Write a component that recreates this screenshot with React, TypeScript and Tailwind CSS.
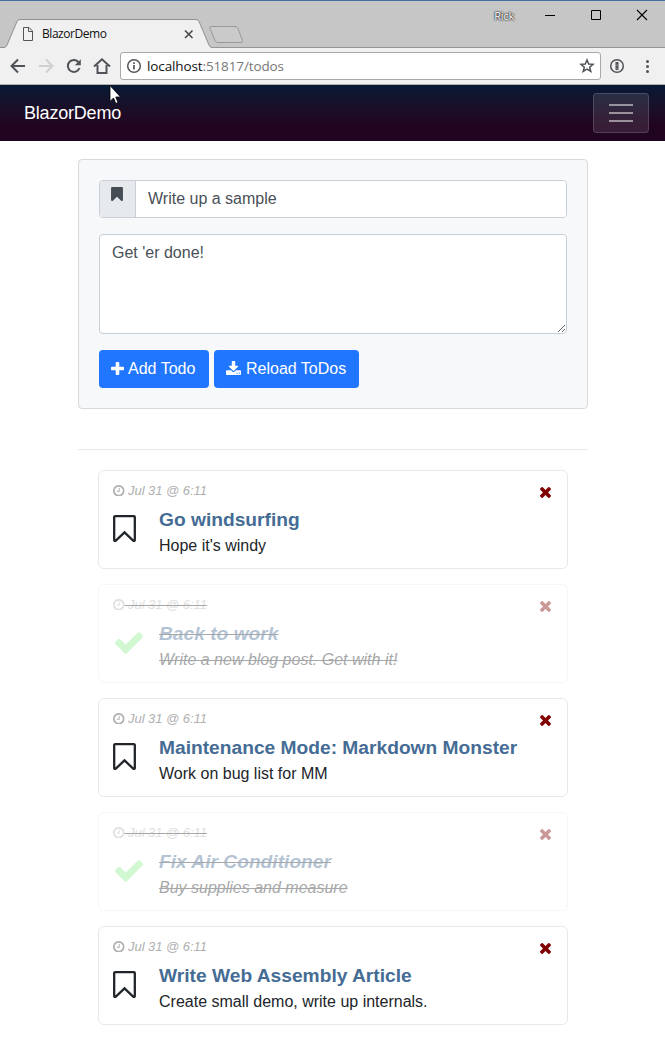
import React from "react";

const ICONS = {
  plus: {
    box: "192 128 1408 1408",
    d: "M1600 736v192q0 40-28 68t-68 28h-416v416q0 40-28 68t-68 28h-192q-40 0-68-28t-28-68v-416h-416q-40 0-68-28t-28-68v-192q0-40 28-68t68-28h416v-416q0-40 28-68t68-28h192q40 0 68 28t28 68v416h416q40 0 68 28t28 68z",
  },
  download: {
    box: "64 0 1664 1536",
    d: "M1344 1344q0-26-19-45t-45-19-45 19-19 45 19 45 45 19 45-19 19-45zm256 0q0-26-19-45t-45-19-45 19-19 45 19 45 45 19 45-19 19-45zm128-224v320q0 40-28 68t-68 28h-1472q-40 0-68-28t-28-68v-320q0-40 28-68t68-28h465l135 136q58 56 136 56t136-56l136-136h464q40 0 68 28t28 68zm-325-569q17 41-14 70l-448 448q-18 19-45 19t-45-19l-448-448q-31-29-14-70 17-39 59-39h256v-448q0-26 19-45t45-19h256q26 0 45 19t19 45v448h256q42 0 59 39z",
  },
  clock: {
    box: "128 128 1536 1536",
    d: "M1024 544v448q0 14-9 23t-23 9h-320q-14 0-23-9t-9-23v-64q0-14 9-23t23-9h224v-352q0-14 9-23t23-9h64q14 0 23 9t9 23zm416 352q0-148-73-273t-198-198-273-73-273 73-198 198-73 273 73 273 198 198 273 73 273-73 198-198 73-273zm224 0q0 209-103 385.5t-279.5 279.5-385.5 103-385.5-103-279.5-279.5-103-385.5 103-385.5 279.5-279.5 385.5-103 385.5 103 279.5 279.5 103 385.5z",
  },
  check: {
    box: "121 344 1550 1178",
    d: "M1671 566q0 40-28 68l-724 724-136 136q-28 28-68 28t-68-28l-136-136-362-362q-28-28-28-68t28-68l136-136q28-28 68-28t68 28l294 295 656-657q28-28 68-28t68 28l136 136q28 28 28 68z",
  },
  times: {
    box: "302 366 1188 1188",
    d: "M1490 1322q0 40-28 68l-136 136q-28 28-68 28t-68-28l-294-294-294 294q-28 28-68 28t-68-28l-136-136q-28-28-28-68t28-68l294-294-294-294q-28-28-28-68t28-68l136-136q28-28 68-28t68 28l294 294 294-294q28-28 68-28t68 28l136 136q28 28 28 68t-28 68l-294 294 294 294q28 28 28 68z",
  },
  bookmark: {
    box: "256 128 1280 1508",
    d: "M1420 128q23 0 44 9 33 13 52.5 41t19.5 62v1289q0 34-19.5 62t-52.5 41q-19 8-44 8-48 0-83-32l-441-424-441 424q-36 33-83 33-23 0-44-9-33-13-52.5-41t-19.5-62v-1289q0-34 19.5-62t52.5-41q21-9 44-9h1048z",
  },
  bookmarkOutline: {
    box: "256 128 1280 1508",
    d: "M1408 256h-1024v1242l423-406 89-85 89 85 423 406v-1242zm12-128q23 0 44 9 33 13 52.5 41t19.5 62v1289q0 34-19.5 62t-52.5 41q-19 8-44 8-48 0-83-32l-441-424-441 424q-36 33-83 33-23 0-44-9-33-13-52.5-41t-19.5-62v-1289q0-34 19.5-62t52.5-41q21-9 44-9h1048z",
  },
};

function Icon({ name, className }: { name: keyof typeof ICONS; className: string }) {
  return (
    <svg viewBox={ICONS[name].box} fill="currentColor" className={`shrink-0 ${className}`}>
      <path d={ICONS[name].d} />
    </svg>
  );
}

interface Todo {
  title: string;
  text: string;
  done: boolean;
}

const todos: Todo[] = [
  { title: "Go windsurfing", text: "Hope it's windy", done: false },
  { title: "Back to work", text: "Write a new blog post. Get with it!", done: true },
  { title: "Maintenance Mode: Markdown Monster", text: "Work on bug list for MM", done: false },
  { title: "Fix Air Conditioner", text: "Buy supplies and measure", done: true },
  { title: "Write Web Assembly Article", text: "Create small demo, write up internals.", done: false },
];

function TitleBar() {
  return (
    <div className="relative flex h-12 justify-between border-t border-[#4370a3] bg-[#c6c6c6]">
      <svg className="absolute -top-px left-0 h-12 w-[665px]" viewBox="0 0 665 48" fill="none">
        <path d="M0 47.5H665" stroke="#969696" />
        <path d="M0 48V47.5H4Q6 47.5 7 45L17 21.5Q18 19.5 20 19.5H196Q198 19.5 199 21.5L209 45Q210 47.5 212 47.5V48Z" fill="#f0f0f0" />
        <path d="M0 47.5H4Q6 47.5 7 45L17 21.5Q18 19.5 20 19.5H196Q198 19.5 199 21.5L209 45Q210 47.5 212 47.5" stroke="#8f8f8f" />
        <path d="M211 26.5H235Q237 26.5 238 28.5L242.5 40.5Q243 42.5 241 42.5H218Q216 42.5 215 40.5L210 28.5Q209.500 26.500 211 26.500Z" stroke="#999" fill="#cacaca" />
        <path d="M23.500 27.500H29L32.500 31V40.500H23.500ZM28.500 27.500V31.500H32.500" stroke="#555" />
        <path d="M185 30.500L192.500 38M192.500 30.500L185 38" stroke="#444" strokeWidth="1.5" />
      </svg>
      <div className="relative pl-[42px] pt-[25px] font-['Open_Sans',sans-serif] text-[12px] leading-4 tracking-[-0.45px] text-[#111]">
        BlazorDemo
      </div>
      <div className="flex pt-[7px]">
        <span className="mr-[30px] font-['Open_Sans',sans-serif] text-[11px] leading-4 tracking-[-0.2px] text-white [text-shadow:0_0_2px_#333,0_0_2px_#333,0_0_1px_#333]">
          Rick
        </span>
        <svg className="mr-[15px] h-4 w-[106px]" viewBox="0 0 106 16" stroke="#000" fill="none">
          <path d="M1 7.500H11" />
          <path d="M47.500 2.500H56.500V11.500H47.500Z" />
          <path d="M93 2L103 12M103 2L93 12" strokeWidth="1.1" />
        </svg>
      </div>
    </div>
  );
}

function Toolbar() {
  return (
    <div className="flex h-[37px] items-center border-b border-[#b0b0aa] bg-[#f0f0f0]">
      <svg className="h-9 w-[120px]" viewBox="0 48 120 36" fill="none" stroke="#505357" strokeWidth="2">
        <path d="M25 66H12M18 59.500L11.500 66L18 72.500" />
        <path d="M39 66H52M46 59.500L52.500 66L46 72.500" stroke="#d0d0d0" />
        <path d="M78.800 62.500A6 6 0 1 0 79.500 68" />
        <path d="M80.800 59.200V65.200H74.800Z" fill="#505357" stroke="none" />
        <path d="M94 66.500L102 59.300L110 66.500M97.500 65V73H106.500V65" />
      </svg>
      <div className="flex h-[28px] w-[481px] items-center rounded-[3px] border border-[#a8a8a8] bg-white">
        <svg className="ml-[5px] h-4 w-4" viewBox="0 0 16 16" fill="none" stroke="#505357">
          <circle cx="8" cy="8" r="6.300" strokeWidth="1.500" />
          <path d="M8 7V11.500M8 4.300V5.900" strokeWidth="1.700" />
        </svg>
        <div className="ml-[5px] flex-1 font-['Open_Sans',sans-serif] text-[13.5px] leading-5 tracking-[-0.12px] text-[#777]">
          <span className="text-[#111]">localhost</span>:51817/todos
        </div>
        <svg className="mr-[5px] h-4 w-4" viewBox="0 0 16 16" fill="none" stroke="#505357" strokeWidth="1.500">
          <path d="M8 2L9.700 6L14 6.300L10.700 9.200L11.800 13.500L8 11.200L4.200 13.500L5.300 9.200L2 6.300L6.300 6Z" />
        </svg>
      </div>
      <svg className="h-9 w-16" viewBox="601 48 64 36" fill="none" stroke="#505357">
        <circle cx="617" cy="66" r="6.300" strokeWidth="1.500" />
        <path d="M617 62V70" strokeWidth="3" />
        <path d="M617 64.500V66M617 68V69" stroke="#aaa" />
        <g fill="#505357" stroke="none">
          <circle cx="647.500" cy="61.500" r="1.500" />
          <circle cx="647.500" cy="66.500" r="1.500" />
          <circle cx="647.500" cy="71.500" r="1.500" />
        </g>
      </svg>
    </div>
  );
}

function Navbar() {
  return (
    <nav className="flex h-14 items-center justify-between bg-linear-to-b from-[#051935] to-[#210520] to-70% pl-6 pr-4">
      <span className="text-[18px] leading-7 tracking-[-0.2px] text-white">BlazorDemo</span>
      <button className="flex h-10 w-14 flex-col items-center justify-center gap-[6px] rounded border border-white/15 bg-white/10">
        <span className="h-[2px] w-6 bg-white/50" />
        <span className="h-[2px] w-6 bg-white/50" />
        <span className="h-[2px] w-6 bg-white/50" />
      </button>
    </nav>
  );
}

function TodoForm() {
  return (
    <section className="h-[250px] rounded border border-[#d7d9db] bg-[#f7f8fa] p-5">
      <div className="flex h-[38px] overflow-hidden rounded border border-[#c8cfd7] bg-white">
        <div className="w-9 border-r border-[#c8cfd7] bg-[#e7eaed] pl-[11px] pt-[6px]">
          <Icon name="bookmark" className="h-[14px] w-[12px] text-[#454c54]" />
        </div>
        <input
          className="min-w-0 flex-1 bg-white px-3 text-[16px] leading-6 text-[#495057] outline-none"
          defaultValue="Write up a sample"
        />
      </div>
      <textarea
        className="mt-4 block h-[100px] w-full rounded border border-[#c8cfd7] bg-white px-3 py-[6px] text-[16px] leading-6 text-[#495057] outline-none"
        defaultValue="Get 'er done!"
      />
      <div className="mt-4 flex gap-[5px]">
        <button className="flex h-[38px] w-[110px] items-center rounded bg-[#2176ff] pl-[12px] text-[16px] text-white">
          <Icon name="plus" className="mb-[2px] mr-[4px] h-[13px] w-[13px]" />
          <span className="whitespace-nowrap">Add Todo</span>
        </button>
        <button className="flex h-[38px] w-[145px] items-center rounded bg-[#2176ff] pl-[12px] text-[16px] text-white">
          <Icon name="download" className="mb-[2px] mr-[5px] h-[14px] w-[15px]" />
          <span className="whitespace-nowrap">Reload ToDos</span>
        </button>
      </div>
    </section>
  );
}

function TodoCard({ todo }: { todo: Todo }) {
  const struck = todo.done ? "italic line-through decoration-[#212529] decoration-1" : "";
  return (
    <article
      className={`flex h-[99px] justify-between rounded-md border border-[#e8e9ea] pl-[14px] pr-[16px] pt-[10px] ${todo.done ? "opacity-40" : ""}`}
    >
      <div>
        <div className="flex h-[19px] items-center text-[13px] italic leading-[19px] text-[#b0b0b0]">
          <Icon name="clock" className="h-[11.500px] w-[11.500px]" />
          <span className={`whitespace-pre tracking-[-0.05px] ${struck}`}> Jul 31 @ 6:11</span>
        </div>
        <div className="flex">
          <div className="w-[46px]">
            {todo.done ? (
              <Icon name="check" className="ml-[2px] mt-[18px] h-[22px] w-[28px] text-[#90ee90]" />
            ) : (
              <Icon name="bookmarkOutline" className="mt-[15px] h-[27px] w-[23px] text-[#212529]" />
            )}
          </div>
          <div className="pt-[6px]">
            <h4 className={`text-[19.2px] font-bold leading-[28px] text-[#456c94] ${struck}`}>{todo.title}</h4>
            <p className={`text-[16px] leading-[24px] text-[#212529] ${struck}`}>{todo.text}</p>
          </div>
        </div>
      </div>
      <Icon name="times" className="mt-[6px] h-[11px] w-[11px] text-[#800000]" />
    </article>
  );
}

export default function App() {
  return (
    <div className="relative min-h-[1064px] w-full overflow-hidden bg-white font-['Liberation_Sans',Arial,sans-serif]">
      <TitleBar />
      <Toolbar />
      <Navbar />
      <main className="ml-[78px] w-[510px] pt-[18px]">
        <TodoForm />
        <hr className="mt-10 border-[#e9e9e9]" />
        <div className="flex flex-col gap-[15px] px-5 pt-5">
          {todos.map((todo) => (
            <TodoCard key={todo.title} todo={todo} />
          ))}
        </div>
      </main>
      <svg className="absolute left-[109px] top-[85px] h-5 w-[13px]" viewBox="0 0 13 20">
        <path d="M1 0.500V16.500L4.500 13L6.800 18.500L9 17.500L6.800 12H11.500Z" fill="#fff" stroke="#000" strokeWidth="0.800" />
      </svg>
    </div>
  );
}
